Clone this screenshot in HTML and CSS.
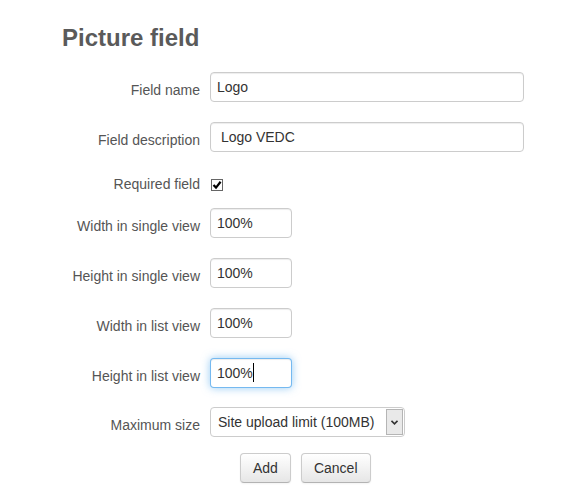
FILE: index.html
```html
<!DOCTYPE html>
<html>
<head>
<meta charset="utf-8">
<link rel="stylesheet" href="styles.css">
</head>
<body>
<div class="page">
  <h1 class="title">Picture field</h1>
  <form class="form">
    <div class="row">
      <label class="label" for="f1">Field name</label>
      <div class="ctrl"><input id="f1" class="input wide" type="text" value="Logo"></div>
    </div>
    <div class="row">
      <label class="label" for="f2">Field description</label>
      <div class="ctrl"><input id="f2" class="input wide" type="text" value=" Logo VEDC"></div>
    </div>
    <div class="row row-check">
      <label class="label label-check" for="f3">Required field</label>
      <div class="ctrl"><input id="f3" class="check" type="checkbox" checked></div>
    </div>
    <div class="row">
      <label class="label" for="f4">Width in single view</label>
      <div class="ctrl"><input id="f4" class="input short" type="text" value="100%"></div>
    </div>
    <div class="row">
      <label class="label" for="f5">Height in single view</label>
      <div class="ctrl"><input id="f5" class="input short" type="text" value="100%"></div>
    </div>
    <div class="row">
      <label class="label" for="f6">Width in list view</label>
      <div class="ctrl"><input id="f6" class="input short" type="text" value="100%"></div>
    </div>
    <div class="row row-focus">
      <label class="label" for="f7">Height in list view</label>
      <div class="ctrl caret-wrap"><input id="f7" class="input short focused" type="text" value="100%"><span class="caret"></span></div>
    </div>
    <div class="row row-select">
      <label class="label" for="f8">Maximum size</label>
      <div class="ctrl">
        <div class="select">
          <select id="f8" class="select-el"><option>Site upload limit (100MB)</option></select>
          <span class="arrow"><svg width="7" height="5" viewBox="0 0 7 5"><path d="M0.5 0.8 L3.5 3.8 L6.5 0.8" fill="none" stroke="#333" stroke-width="1.6"/></svg></span>
        </div>
      </div>
    </div>
    <div class="row row-buttons">
      <div></div>
      <div class="ctrl buttons">
        <button type="button" class="btn">Add</button>
        <button type="button" class="btn">Cancel</button>
      </div>
    </div>
  </form>
</div>
</body>
</html>
```
FILE: styles.css
```css
* { box-sizing: border-box; }
body {
  margin: 0;
  background: #fff;
  font-family: "Liberation Sans", Arial, sans-serif;
  font-size: 14px;
  color: #555;
}
.page { padding-top: 23px; }
.title {
  margin: 0 0 19px 62px;
  font-size: 24px;
  line-height: 30px;
  font-weight: bold;
  color: #5a5a5a;
}
.form { display: flex; flex-direction: column; }
.row {
  display: grid;
  grid-template-columns: 200px 1fr;
  column-gap: 10px;
  margin-bottom: 20px;
}
.label {
  text-align: right;
  line-height: 20px;
  padding-top: 8px;
  color: #555;
}
.row-check { height: 16px; }
.label-check { padding-top: 2px; }
.row-focus { margin-bottom: 19px; }
.row-select { margin-bottom: 16px; }
.ctrl { display: flex; align-items: flex-start; }
.input {
  height: 30px;
  padding: 4px 6px;
  border: 1px solid #ccc;
  border-radius: 4px;
  font: 14px/21px "Liberation Sans", Arial, sans-serif;
  color: #333;
  background: #fff;
  box-shadow: inset 0 1px 1px rgba(0,0,0,0.075);
  outline: none;
}
.wide { width: 314px; }
.short { width: 82px; }
.focused {
  border-color: rgba(82,168,236,0.8);
  box-shadow: inset 0 1px 1px rgba(0,0,0,0.075), 0 0 8px rgba(82,168,236,0.6);
}
.caret-wrap { position: relative; }
.caret {
  position: absolute;
  left: 43px;
  top: 5px;
  width: 1px;
  height: 19px;
  background: #000;
}
.check {
  appearance: none;
  -webkit-appearance: none;
  margin: 7px 0 0 1px;
  width: 12px;
  height: 12px;
  border: 1px solid #666;
  border-radius: 0;
  background: #fff url("data:image/svg+xml;utf8,<svg xmlns='http://www.w3.org/2000/svg' width='10' height='10' viewBox='0 0 10 10'><path d='M1.5 5 L4 7.6 L8.6 1.8' fill='none' stroke='black' stroke-width='2.2'/></svg>") center / 10px 10px no-repeat;
}
.select {
  display: flex;
  width: 195px;
  height: 30px;
  border: 1px solid #ccc;
  border-radius: 4px;
  background: #fff;
  overflow: hidden;
}
.select-el {
  appearance: none;
  -webkit-appearance: none;
  flex: 1;
  min-width: 0;
  border: 0;
  background: transparent;
  padding: 0 0 0 7px;
  font: 14px/20px "Liberation Sans", Arial, sans-serif;
  color: #333;
  outline: none;
}
.arrow {
  width: 17px;
  margin: 1px 1px 1px 0;
  border: 1px solid #b5b5b5;
  background: #e9e9e9;
  display: flex;
  align-items: center;
  justify-content: center;
}
.buttons { gap: 10px; padding-left: 30px; }
.btn {
  height: 30px;
  padding: 4px 12px;
  border: 1px solid #ccc;
  border-bottom-color: #b3b3b3;
  border-radius: 4px;
  background: linear-gradient(#fff, #e6e6e6);
  font: 14px/20px "Liberation Sans", Arial, sans-serif;
  color: #333;
  box-shadow: inset 0 1px 0 rgba(255,255,255,0.2), 0 1px 2px rgba(0,0,0,0.05);
}
```
